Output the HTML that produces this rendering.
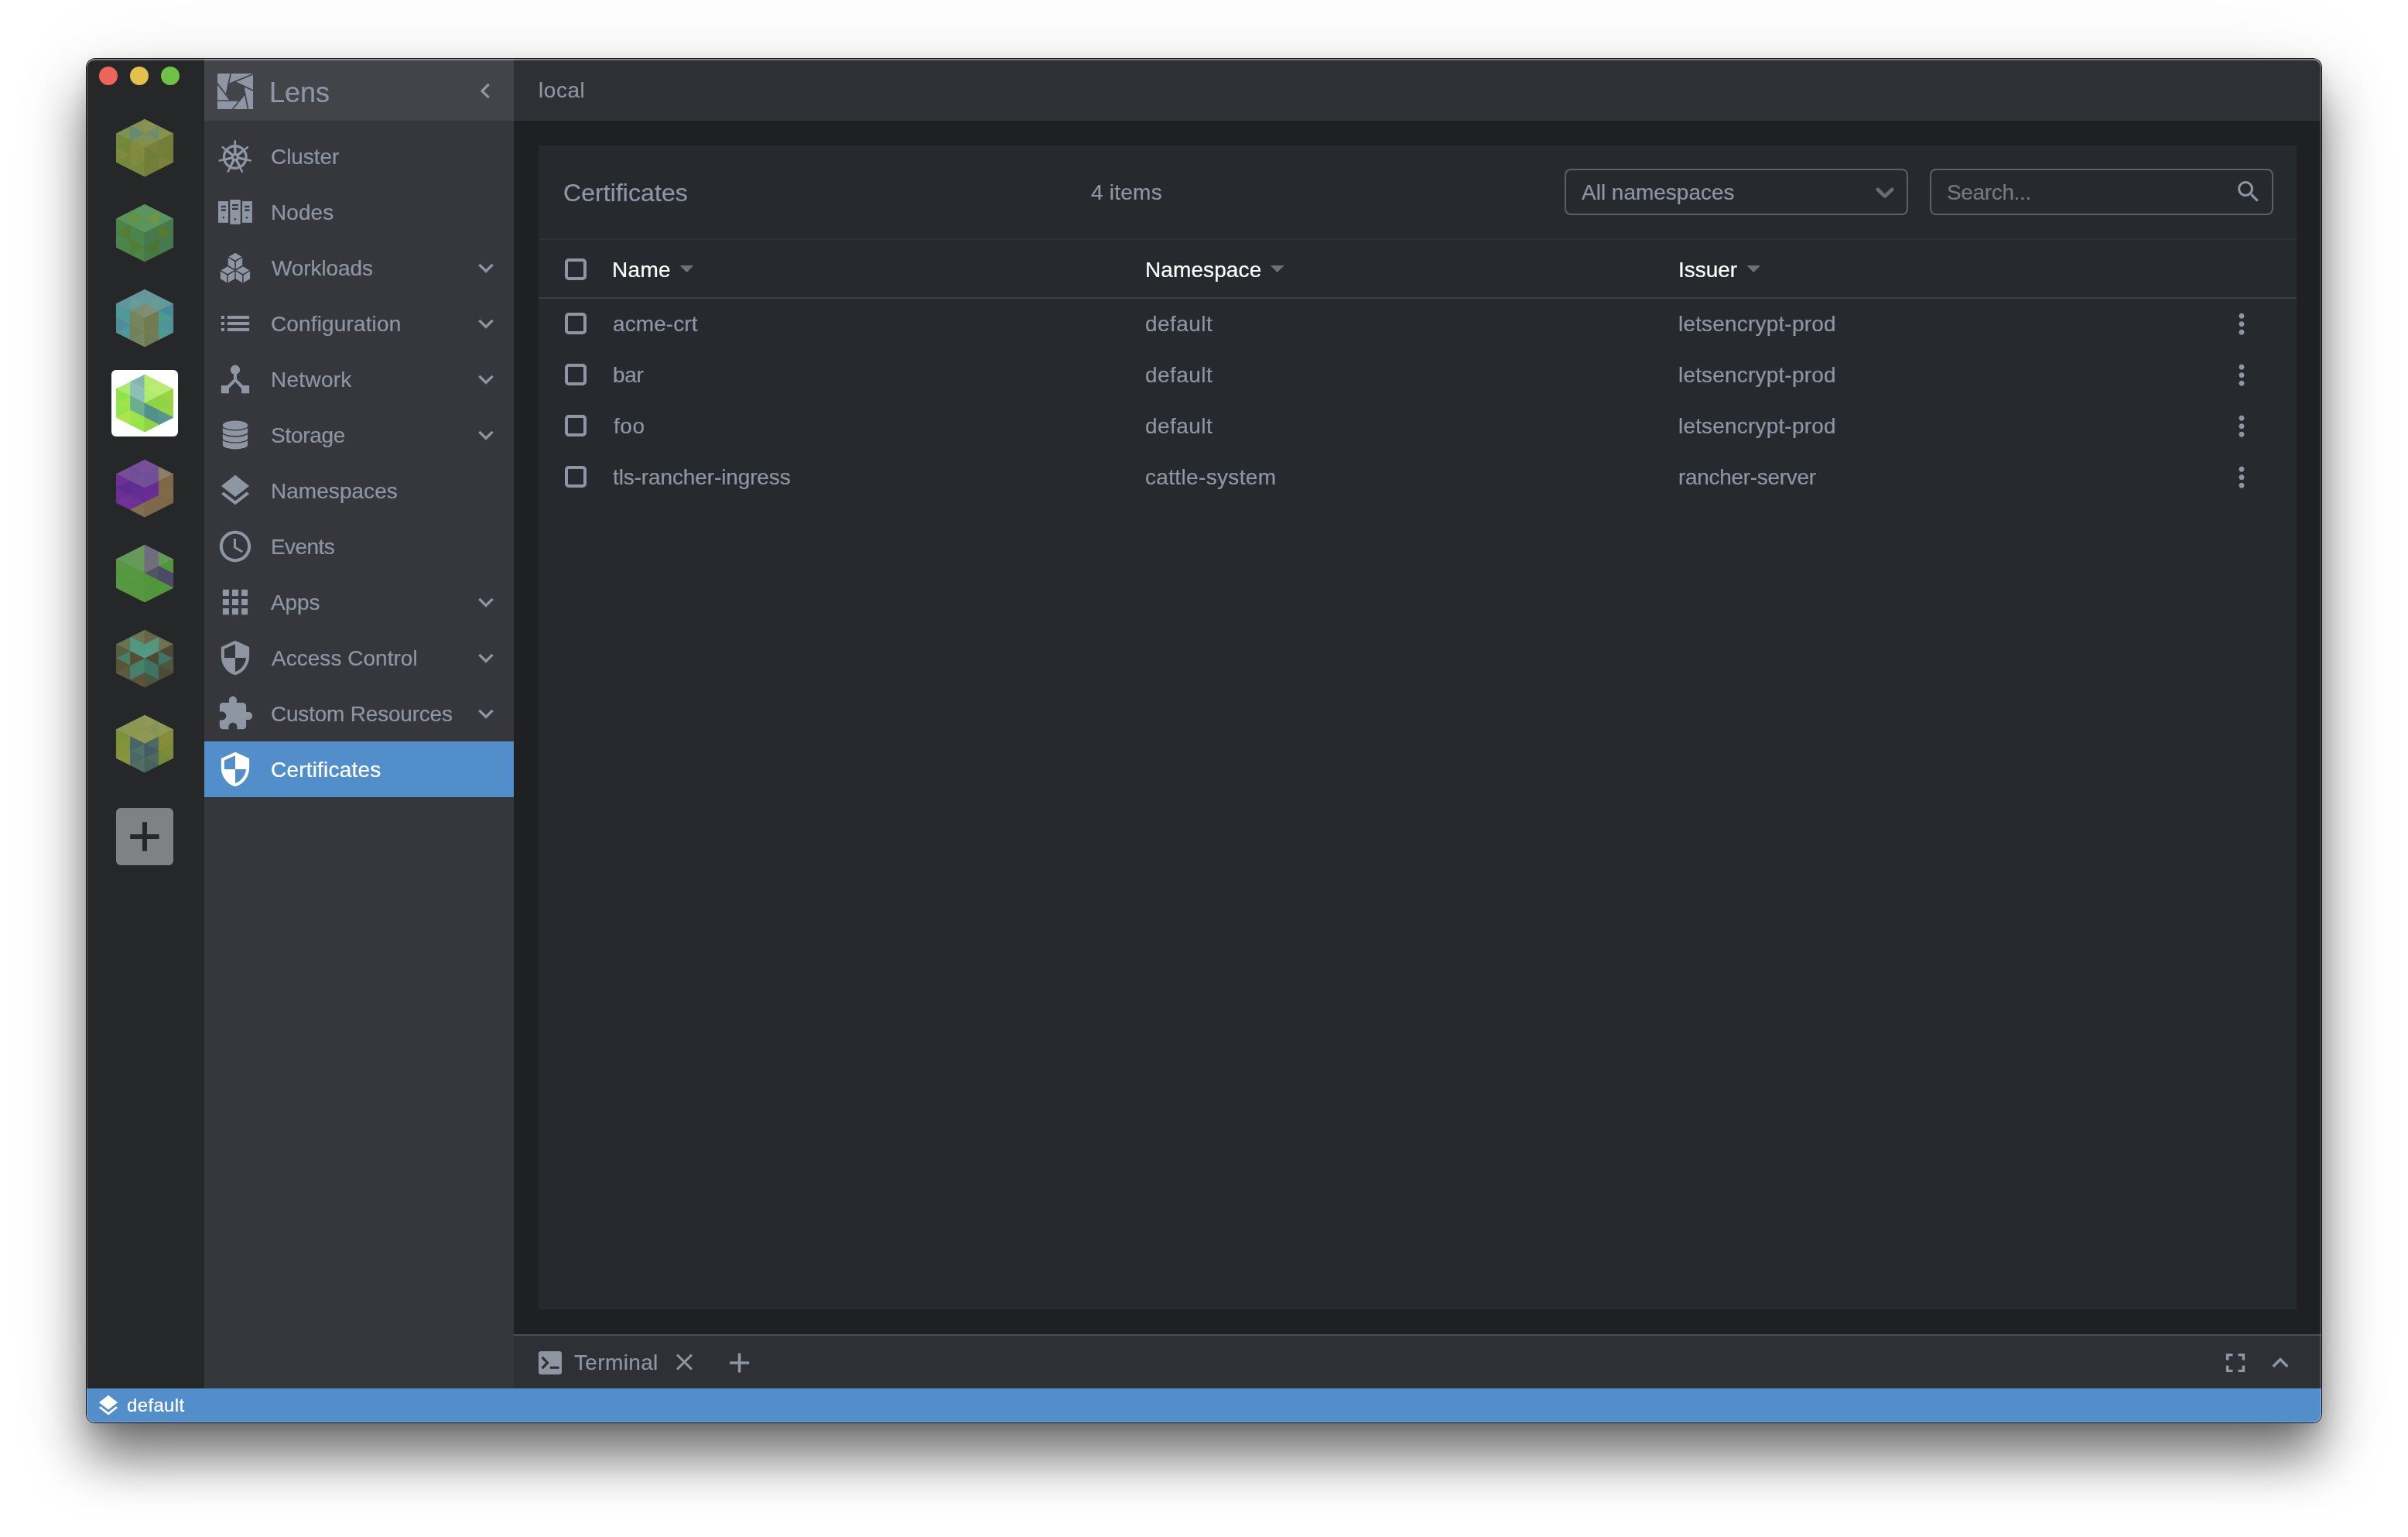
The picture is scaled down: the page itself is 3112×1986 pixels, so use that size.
<!DOCTYPE html>
<html lang="en">
<head>
<meta charset="utf-8">
<title>Lens - Certificates</title>
<style>
*{box-sizing:border-box;margin:0;padding:0}
html,body{width:3112px;height:1986px;overflow:hidden;background:#fff}
body{font-family:"Liberation Sans",sans-serif;color:#8e95a3;position:relative}
#shadow{position:absolute;left:112px;top:76px;width:2888px;height:1762px;border-radius:11px;
  box-shadow:0 0 0 1px rgba(0,0,0,.9),0 45px 68px 0 rgba(0,0,0,.55),0 7px 20px 0 rgba(0,0,0,.117),0 0 135px 0 rgba(0,0,0,.053)}
#win{position:absolute;left:0;top:0;width:3112px;height:1986px;clip-path:inset(76px 112px 148px 112px round 10px)}
.p{position:absolute}
.g{display:contents}
#rim{left:112px;top:76px;width:2888px;height:1762px;border-radius:10px;z-index:50;
  box-shadow:inset 0 2px 0 0 rgba(255,255,255,.38), inset 1px 0 0 0 rgba(255,255,255,.17), inset 2px 0 0 0 rgba(255,255,255,.06), inset -2px 0 0 0 rgba(255,255,255,.17), inset 0 -1px 0 0 rgba(255,255,255,.3)}
#clusters{left:112px;top:76px;width:152px;height:1718px;background:#262729}
#sidebar{left:264px;top:76px;width:400px;height:1718px;background:#36373c}
#sbhead{left:264px;top:76px;width:400px;height:80px;background:#434449}
#active{left:264px;top:958px;width:400px;height:72px;background:#528fca}
#topbar{left:664px;top:76px;width:2336px;height:80px;background:#2f3035}
#mainbg{left:664px;top:156px;width:2336px;height:1568px;background:#1f2024}
#panel{left:696px;top:188px;width:2272px;height:1504px;background:#262a2f}
#dock{left:664px;top:1724px;width:2336px;height:70px;background:#2f3035;border-top:2px solid #4c4f53}
#status{left:112px;top:1794px;width:2888px;height:44px;background:#528fca}
.t{position:absolute;white-space:nowrap;line-height:1;will-change:transform;-webkit-text-stroke:.22px currentColor}
.ic{position:absolute;overflow:visible}
.tl{position:absolute;width:24px;height:24px;border-radius:50%;top:86px}
.hl{position:absolute;left:696px;width:2272px;height:2px}
.cb{position:absolute;left:730px;width:28px;height:28px;border:4px solid #8e95a3;border-radius:5px}
.box{position:absolute;top:218px;width:444px;height:60px;border:2px solid #5c6069;border-radius:8px}
#addc{position:absolute;left:150px;top:1044px;width:74px;height:74px;border-radius:6px;background:#808183}
#actc{position:absolute;left:144px;top:478px;width:86px;height:86px;border-radius:6px;background:#fff}
</style>
</head>
<body>
<div id="shadow"></div>
<div id="win">
<aside class="p" id="clusters"></aside>
<nav class="p" id="sidebar"></nav>
<div class="p" id="sbhead"></div>
<div class="p" id="active"></div>
<header class="p" id="topbar"></header>
<main class="p" id="mainbg"></main>
<div class="p" id="panel"></div>
<footer class="p" id="dock"></footer>
<div class="p" id="status"></div>

<div class="tl" style="left:128px;background:#ed655a"></div>
<div class="tl" style="left:168px;background:#e2c14c"></div>
<div class="tl" style="left:208px;background:#71c148"></div>
<div id="actc"></div>
<svg class="ic" style="left:148px;top:152px" width="80" height="80" viewBox="148 152 80 80"><polygon points="150.45,172.7 168.75,163.5 168.75,181.9" fill="#7f9050" stroke="#7f9050" stroke-width="1" stroke-linejoin="round"/><polygon points="150.45,172.7 150.45,191.1 168.75,181.9" fill="#74893c" stroke="#74893c" stroke-width="1" stroke-linejoin="round"/><polygon points="150.45,191.1 168.75,181.9 168.75,200.3" fill="#71883b" stroke="#71883b" stroke-width="1" stroke-linejoin="round"/><polygon points="150.45,191.1 150.45,209.5 168.75,200.3" fill="#7c8b3d" stroke="#7c8b3d" stroke-width="1" stroke-linejoin="round"/><polygon points="150.45,209.5 168.75,200.3 168.75,218.7" fill="#74893c" stroke="#74893c" stroke-width="1" stroke-linejoin="round"/><polygon points="168.75,163.5 187.05,154.3 187.05,172.7" fill="#869150" stroke="#869150" stroke-width="1" stroke-linejoin="round"/><polygon points="168.75,163.5 168.75,181.9 187.05,172.7" fill="#638c77" stroke="#638c77" stroke-width="1" stroke-linejoin="round"/><polygon points="168.75,181.9 187.05,172.7 187.05,191.1" fill="#809052" stroke="#809052" stroke-width="1" stroke-linejoin="round"/><polygon points="168.75,181.9 168.75,200.3 187.05,191.1" fill="#848a3b" stroke="#848a3b" stroke-width="1" stroke-linejoin="round"/><polygon points="168.75,200.3 187.05,191.1 187.05,209.5" fill="#848a3b" stroke="#848a3b" stroke-width="1" stroke-linejoin="round"/><polygon points="168.75,200.3 168.75,218.7 187.05,209.5" fill="#7d8b3e" stroke="#7d8b3e" stroke-width="1" stroke-linejoin="round"/><polygon points="168.75,218.7 187.05,209.5 187.05,227.9" fill="#74893c" stroke="#74893c" stroke-width="1" stroke-linejoin="round"/><polygon points="187.05,154.3 187.05,172.7 205.35,163.5" fill="#8a9352" stroke="#8a9352" stroke-width="1" stroke-linejoin="round"/><polygon points="187.05,172.7 205.35,163.5 205.35,181.9" fill="#6b8e6e" stroke="#6b8e6e" stroke-width="1" stroke-linejoin="round"/><polygon points="187.05,172.7 187.05,191.1 205.35,181.9" fill="#819052" stroke="#819052" stroke-width="1" stroke-linejoin="round"/><polygon points="187.05,191.1 205.35,181.9 205.35,200.3" fill="#7a7f3a" stroke="#7a7f3a" stroke-width="1" stroke-linejoin="round"/><polygon points="187.05,191.1 187.05,209.5 205.35,200.3" fill="#717e39" stroke="#717e39" stroke-width="1" stroke-linejoin="round"/><polygon points="187.05,209.5 205.35,200.3 205.35,218.7" fill="#727f3a" stroke="#727f3a" stroke-width="1" stroke-linejoin="round"/><polygon points="187.05,209.5 187.05,227.9 205.35,218.7" fill="#727f3a" stroke="#727f3a" stroke-width="1" stroke-linejoin="round"/><polygon points="205.35,163.5 205.35,181.9 223.65,172.7" fill="#849350" stroke="#849350" stroke-width="1" stroke-linejoin="round"/><polygon points="205.35,181.9 223.65,172.7 223.65,191.1" fill="#737f38" stroke="#737f38" stroke-width="1" stroke-linejoin="round"/><polygon points="205.35,181.9 205.35,200.3 223.65,191.1" fill="#737f3a" stroke="#737f3a" stroke-width="1" stroke-linejoin="round"/><polygon points="205.35,200.3 223.65,191.1 223.65,209.5" fill="#6f7f39" stroke="#6f7f39" stroke-width="1" stroke-linejoin="round"/><polygon points="205.35,200.3 205.35,218.7 223.65,209.5" fill="#7b803a" stroke="#7b803a" stroke-width="1" stroke-linejoin="round"/></svg>
<svg class="ic" style="left:148px;top:262px" width="80" height="80" viewBox="148 262 80 80"><polygon points="150.45,282.7 168.75,273.5 168.75,291.9" fill="#59945d" stroke="#59945d" stroke-width="1" stroke-linejoin="round"/><polygon points="150.45,282.7 150.45,301.1 168.75,291.9" fill="#4b8549" stroke="#4b8549" stroke-width="1" stroke-linejoin="round"/><polygon points="150.45,301.1 168.75,291.9 168.75,310.3" fill="#547f33" stroke="#547f33" stroke-width="1" stroke-linejoin="round"/><polygon points="150.45,301.1 150.45,319.5 168.75,310.3" fill="#4a8453" stroke="#4a8453" stroke-width="1" stroke-linejoin="round"/><polygon points="150.45,319.5 168.75,310.3 168.75,328.7" fill="#4b8547" stroke="#4b8547" stroke-width="1" stroke-linejoin="round"/><polygon points="168.75,273.5 187.05,264.3 187.05,282.7" fill="#5a955e" stroke="#5a955e" stroke-width="1" stroke-linejoin="round"/><polygon points="168.75,273.5 168.75,291.9 187.05,282.7" fill="#649441" stroke="#649441" stroke-width="1" stroke-linejoin="round"/><polygon points="168.75,291.9 187.05,282.7 187.05,301.1" fill="#5a955d" stroke="#5a955d" stroke-width="1" stroke-linejoin="round"/><polygon points="168.75,291.9 168.75,310.3 187.05,301.1" fill="#4b854b" stroke="#4b854b" stroke-width="1" stroke-linejoin="round"/><polygon points="168.75,310.3 187.05,301.1 187.05,319.5" fill="#4b854c" stroke="#4b854c" stroke-width="1" stroke-linejoin="round"/><polygon points="168.75,310.3 168.75,328.7 187.05,319.5" fill="#547f33" stroke="#547f33" stroke-width="1" stroke-linejoin="round"/><polygon points="168.75,328.7 187.05,319.5 187.05,337.9" fill="#4c8548" stroke="#4c8548" stroke-width="1" stroke-linejoin="round"/><polygon points="187.05,264.3 187.05,282.7 205.35,273.5" fill="#5a9564" stroke="#5a9564" stroke-width="1" stroke-linejoin="round"/><polygon points="187.05,282.7 205.35,273.5 205.35,291.9" fill="#6f9444" stroke="#6f9444" stroke-width="1" stroke-linejoin="round"/><polygon points="187.05,282.7 187.05,301.1 205.35,291.9" fill="#5a955d" stroke="#5a955d" stroke-width="1" stroke-linejoin="round"/><polygon points="187.05,301.1 205.35,291.9 205.35,310.3" fill="#467a4b" stroke="#467a4b" stroke-width="1" stroke-linejoin="round"/><polygon points="187.05,301.1 187.05,319.5 205.35,310.3" fill="#467a4d" stroke="#467a4d" stroke-width="1" stroke-linejoin="round"/><polygon points="187.05,319.5 205.35,310.3 205.35,328.7" fill="#4a7632" stroke="#4a7632" stroke-width="1" stroke-linejoin="round"/><polygon points="187.05,319.5 187.05,337.9 205.35,328.7" fill="#467a45" stroke="#467a45" stroke-width="1" stroke-linejoin="round"/><polygon points="205.35,273.5 205.35,291.9 223.65,282.7" fill="#59955f" stroke="#59955f" stroke-width="1" stroke-linejoin="round"/><polygon points="205.35,291.9 223.65,282.7 223.65,301.1" fill="#467a4c" stroke="#467a4c" stroke-width="1" stroke-linejoin="round"/><polygon points="205.35,291.9 205.35,310.3 223.65,301.1" fill="#557a31" stroke="#557a31" stroke-width="1" stroke-linejoin="round"/><polygon points="205.35,310.3 223.65,301.1 223.65,319.5" fill="#467a4c" stroke="#467a4c" stroke-width="1" stroke-linejoin="round"/><polygon points="205.35,310.3 205.35,328.7 223.65,319.5" fill="#467a4c" stroke="#467a4c" stroke-width="1" stroke-linejoin="round"/></svg>
<svg class="ic" style="left:148px;top:372px" width="80" height="80" viewBox="148 372 80 80"><polygon points="150.45,392.7 168.75,383.5 168.75,401.9" fill="#62979a" stroke="#62979a" stroke-width="1" stroke-linejoin="round"/><polygon points="150.45,392.7 150.45,411.1 168.75,401.9" fill="#509997" stroke="#509997" stroke-width="1" stroke-linejoin="round"/><polygon points="150.45,411.1 168.75,401.9 168.75,420.3" fill="#509997" stroke="#509997" stroke-width="1" stroke-linejoin="round"/><polygon points="150.45,411.1 150.45,429.5 168.75,420.3" fill="#4e8c9a" stroke="#4e8c9a" stroke-width="1" stroke-linejoin="round"/><polygon points="150.45,429.5 168.75,420.3 168.75,438.7" fill="#51979a" stroke="#51979a" stroke-width="1" stroke-linejoin="round"/><polygon points="168.75,383.5 187.05,374.3 187.05,392.7" fill="#65989b" stroke="#65989b" stroke-width="1" stroke-linejoin="round"/><polygon points="168.75,383.5 168.75,401.9 187.05,392.7" fill="#659d9b" stroke="#659d9b" stroke-width="1" stroke-linejoin="round"/><polygon points="168.75,401.9 187.05,392.7 187.05,411.1" fill="#7e8c72" stroke="#7e8c72" stroke-width="1" stroke-linejoin="round"/><polygon points="168.75,401.9 168.75,420.3 187.05,411.1" fill="#76855a" stroke="#76855a" stroke-width="1" stroke-linejoin="round"/><polygon points="168.75,420.3 187.05,411.1 187.05,429.5" fill="#76855b" stroke="#76855b" stroke-width="1" stroke-linejoin="round"/><polygon points="168.75,420.3 168.75,438.7 187.05,429.5" fill="#74805a" stroke="#74805a" stroke-width="1" stroke-linejoin="round"/><polygon points="168.75,438.7 187.05,429.5 187.05,447.9" fill="#78865d" stroke="#78865d" stroke-width="1" stroke-linejoin="round"/><polygon points="187.05,374.3 187.05,392.7 205.35,383.5" fill="#65989b" stroke="#65989b" stroke-width="1" stroke-linejoin="round"/><polygon points="187.05,392.7 205.35,383.5 205.35,401.9" fill="#669b97" stroke="#669b97" stroke-width="1" stroke-linejoin="round"/><polygon points="187.05,392.7 187.05,411.1 205.35,401.9" fill="#808f76" stroke="#808f76" stroke-width="1" stroke-linejoin="round"/><polygon points="187.05,411.1 205.35,401.9 205.35,420.3" fill="#707b52" stroke="#707b52" stroke-width="1" stroke-linejoin="round"/><polygon points="187.05,411.1 187.05,429.5 205.35,420.3" fill="#707b52" stroke="#707b52" stroke-width="1" stroke-linejoin="round"/><polygon points="187.05,429.5 205.35,420.3 205.35,438.7" fill="#727f55" stroke="#727f55" stroke-width="1" stroke-linejoin="round"/><polygon points="187.05,429.5 187.05,447.9 205.35,438.7" fill="#707a4f" stroke="#707a4f" stroke-width="1" stroke-linejoin="round"/><polygon points="205.35,383.5 205.35,401.9 223.65,392.7" fill="#64989b" stroke="#64989b" stroke-width="1" stroke-linejoin="round"/><polygon points="205.35,401.9 223.65,392.7 223.65,411.1" fill="#478a9b" stroke="#478a9b" stroke-width="1" stroke-linejoin="round"/><polygon points="205.35,401.9 205.35,420.3 223.65,411.1" fill="#4e9990" stroke="#4e9990" stroke-width="1" stroke-linejoin="round"/><polygon points="205.35,420.3 223.65,411.1 223.65,429.5" fill="#4d959a" stroke="#4d959a" stroke-width="1" stroke-linejoin="round"/><polygon points="205.35,420.3 205.35,438.7 223.65,429.5" fill="#4e9990" stroke="#4e9990" stroke-width="1" stroke-linejoin="round"/></svg>
<svg class="ic" style="left:148px;top:482px" width="80" height="80" viewBox="148 482 80 80"><polygon points="150.45,502.7 168.75,493.5 168.75,511.9" fill="#abeb6e" stroke="#abeb6e" stroke-width="1" stroke-linejoin="round"/><polygon points="150.45,502.7 150.45,521.1 168.75,511.9" fill="#8fe449" stroke="#8fe449" stroke-width="1" stroke-linejoin="round"/><polygon points="150.45,521.1 168.75,511.9 168.75,530.3" fill="#9ee54a" stroke="#9ee54a" stroke-width="1" stroke-linejoin="round"/><polygon points="150.45,521.1 150.45,539.5 168.75,530.3" fill="#96e44b" stroke="#96e44b" stroke-width="1" stroke-linejoin="round"/><polygon points="150.45,539.5 168.75,530.3 168.75,548.7" fill="#b0e44b" stroke="#b0e44b" stroke-width="1" stroke-linejoin="round"/><polygon points="168.75,493.5 187.05,484.3 187.05,502.7" fill="#85b5b0" stroke="#85b5b0" stroke-width="1" stroke-linejoin="round"/><polygon points="168.75,493.5 168.75,511.9 187.05,502.7" fill="#8dc0b5" stroke="#8dc0b5" stroke-width="1" stroke-linejoin="round"/><polygon points="168.75,511.9 187.05,502.7 187.05,521.1" fill="#8dbfb6" stroke="#8dbfb6" stroke-width="1" stroke-linejoin="round"/><polygon points="168.75,511.9 168.75,530.3 187.05,521.1" fill="#6baf8f" stroke="#6baf8f" stroke-width="1" stroke-linejoin="round"/><polygon points="168.75,530.3 187.05,521.1 187.05,539.5" fill="#69ae8e" stroke="#69ae8e" stroke-width="1" stroke-linejoin="round"/><polygon points="168.75,530.3 168.75,548.7 187.05,539.5" fill="#9ce64c" stroke="#9ce64c" stroke-width="1" stroke-linejoin="round"/><polygon points="168.75,548.7 187.05,539.5 187.05,557.9" fill="#94e54a" stroke="#94e54a" stroke-width="1" stroke-linejoin="round"/><polygon points="187.05,484.3 187.05,502.7 205.35,493.5" fill="#b5ea6d" stroke="#b5ea6d" stroke-width="1" stroke-linejoin="round"/><polygon points="187.05,502.7 205.35,493.5 205.35,511.9" fill="#bbeb72" stroke="#bbeb72" stroke-width="1" stroke-linejoin="round"/><polygon points="187.05,502.7 187.05,521.1 205.35,511.9" fill="#b0eb70" stroke="#b0eb70" stroke-width="1" stroke-linejoin="round"/><polygon points="187.05,521.1 205.35,511.9 205.35,530.3" fill="#8dd347" stroke="#8dd347" stroke-width="1" stroke-linejoin="round"/><polygon points="187.05,521.1 187.05,539.5 205.35,530.3" fill="#52908c" stroke="#52908c" stroke-width="1" stroke-linejoin="round"/><polygon points="187.05,539.5 205.35,530.3 205.35,548.7" fill="#52908c" stroke="#52908c" stroke-width="1" stroke-linejoin="round"/><polygon points="187.05,539.5 187.05,557.9 205.35,548.7" fill="#8fd445" stroke="#8fd445" stroke-width="1" stroke-linejoin="round"/><polygon points="205.35,493.5 205.35,511.9 223.65,502.7" fill="#bbeb72" stroke="#bbeb72" stroke-width="1" stroke-linejoin="round"/><polygon points="205.35,511.9 223.65,502.7 223.65,521.1" fill="#99d446" stroke="#99d446" stroke-width="1" stroke-linejoin="round"/><polygon points="205.35,511.9 205.35,530.3 223.65,521.1" fill="#8fd347" stroke="#8fd347" stroke-width="1" stroke-linejoin="round"/><polygon points="205.35,530.3 223.65,521.1 223.65,539.5" fill="#99d445" stroke="#99d445" stroke-width="1" stroke-linejoin="round"/><polygon points="205.35,530.3 205.35,548.7 223.65,539.5" fill="#55978e" stroke="#55978e" stroke-width="1" stroke-linejoin="round"/></svg>
<svg class="ic" style="left:148px;top:592px" width="80" height="80" viewBox="148 592 80 80"><polygon points="150.45,612.7 168.75,603.5 168.75,621.9" fill="#774f96" stroke="#774f96" stroke-width="1" stroke-linejoin="round"/><polygon points="150.45,612.7 150.45,631.1 168.75,621.9" fill="#6b3196" stroke="#6b3196" stroke-width="1" stroke-linejoin="round"/><polygon points="150.45,631.1 168.75,621.9 168.75,640.3" fill="#5c2d91" stroke="#5c2d91" stroke-width="1" stroke-linejoin="round"/><polygon points="150.45,631.1 150.45,649.5 168.75,640.3" fill="#6a3097" stroke="#6a3097" stroke-width="1" stroke-linejoin="round"/><polygon points="150.45,649.5 168.75,640.3 168.75,658.7" fill="#723197" stroke="#723197" stroke-width="1" stroke-linejoin="round"/><polygon points="168.75,603.5 187.05,594.3 187.05,612.7" fill="#78509a" stroke="#78509a" stroke-width="1" stroke-linejoin="round"/><polygon points="168.75,603.5 168.75,621.9 187.05,612.7" fill="#6f4f97" stroke="#6f4f97" stroke-width="1" stroke-linejoin="round"/><polygon points="168.75,621.9 187.05,612.7 187.05,631.1" fill="#745097" stroke="#745097" stroke-width="1" stroke-linejoin="round"/><polygon points="168.75,621.9 168.75,640.3 187.05,631.1" fill="#622e94" stroke="#622e94" stroke-width="1" stroke-linejoin="round"/><polygon points="168.75,640.3 187.05,631.1 187.05,649.5" fill="#622e94" stroke="#622e94" stroke-width="1" stroke-linejoin="round"/><polygon points="168.75,640.3 168.75,658.7 187.05,649.5" fill="#6e3097" stroke="#6e3097" stroke-width="1" stroke-linejoin="round"/><polygon points="168.75,658.7 187.05,649.5 187.05,667.9" fill="#80704f" stroke="#80704f" stroke-width="1" stroke-linejoin="round"/><polygon points="187.05,594.3 187.05,612.7 205.35,603.5" fill="#78509a" stroke="#78509a" stroke-width="1" stroke-linejoin="round"/><polygon points="187.05,612.7 205.35,603.5 205.35,621.9" fill="#744e96" stroke="#744e96" stroke-width="1" stroke-linejoin="round"/><polygon points="187.05,612.7 187.05,631.1 205.35,621.9" fill="#6f4f97" stroke="#6f4f97" stroke-width="1" stroke-linejoin="round"/><polygon points="187.05,631.1 205.35,621.9 205.35,640.3" fill="#682b94" stroke="#682b94" stroke-width="1" stroke-linejoin="round"/><polygon points="187.05,631.1 187.05,649.5 205.35,640.3" fill="#6b2c95" stroke="#6b2c95" stroke-width="1" stroke-linejoin="round"/><polygon points="187.05,649.5 205.35,640.3 205.35,658.7" fill="#7e6a4b" stroke="#7e6a4b" stroke-width="1" stroke-linejoin="round"/><polygon points="187.05,649.5 187.05,667.9 205.35,658.7" fill="#7d694a" stroke="#7d694a" stroke-width="1" stroke-linejoin="round"/><polygon points="205.35,603.5 205.35,621.9 223.65,612.7" fill="#8a7e6a" stroke="#8a7e6a" stroke-width="1" stroke-linejoin="round"/><polygon points="205.35,621.9 223.65,612.7 223.65,631.1" fill="#7f674a" stroke="#7f674a" stroke-width="1" stroke-linejoin="round"/><polygon points="205.35,621.9 205.35,640.3 223.65,631.1" fill="#7e6a4b" stroke="#7e6a4b" stroke-width="1" stroke-linejoin="round"/><polygon points="205.35,640.3 223.65,631.1 223.65,649.5" fill="#7e6a4b" stroke="#7e6a4b" stroke-width="1" stroke-linejoin="round"/><polygon points="205.35,640.3 205.35,658.7 223.65,649.5" fill="#7f674a" stroke="#7f674a" stroke-width="1" stroke-linejoin="round"/></svg>
<svg class="ic" style="left:148px;top:702px" width="80" height="80" viewBox="148 702 80 80"><polygon points="150.45,722.7 168.75,713.5 168.75,731.9" fill="#65995a" stroke="#65995a" stroke-width="1" stroke-linejoin="round"/><polygon points="150.45,722.7 150.45,741.1 168.75,731.9" fill="#55983f" stroke="#55983f" stroke-width="1" stroke-linejoin="round"/><polygon points="150.45,741.1 168.75,731.9 168.75,750.3" fill="#549840" stroke="#549840" stroke-width="1" stroke-linejoin="round"/><polygon points="150.45,741.1 150.45,759.5 168.75,750.3" fill="#549840" stroke="#549840" stroke-width="1" stroke-linejoin="round"/><polygon points="150.45,759.5 168.75,750.3 168.75,768.7" fill="#58983f" stroke="#58983f" stroke-width="1" stroke-linejoin="round"/><polygon points="168.75,713.5 187.05,704.3 187.05,722.7" fill="#67995a" stroke="#67995a" stroke-width="1" stroke-linejoin="round"/><polygon points="168.75,713.5 168.75,731.9 187.05,722.7" fill="#67995a" stroke="#67995a" stroke-width="1" stroke-linejoin="round"/><polygon points="168.75,731.9 187.05,722.7 187.05,741.1" fill="#64995b" stroke="#64995b" stroke-width="1" stroke-linejoin="round"/><polygon points="168.75,731.9 168.75,750.3 187.05,741.1" fill="#579840" stroke="#579840" stroke-width="1" stroke-linejoin="round"/><polygon points="168.75,750.3 187.05,741.1 187.05,759.5" fill="#549840" stroke="#549840" stroke-width="1" stroke-linejoin="round"/><polygon points="168.75,750.3 168.75,768.7 187.05,759.5" fill="#549840" stroke="#549840" stroke-width="1" stroke-linejoin="round"/><polygon points="168.75,768.7 187.05,759.5 187.05,777.9" fill="#57983f" stroke="#57983f" stroke-width="1" stroke-linejoin="round"/><polygon points="187.05,704.3 187.05,722.7 205.35,713.5" fill="#6e6c7f" stroke="#6e6c7f" stroke-width="1" stroke-linejoin="round"/><polygon points="187.05,722.7 205.35,713.5 205.35,731.9" fill="#6e6c7d" stroke="#6e6c7d" stroke-width="1" stroke-linejoin="round"/><polygon points="187.05,722.7 187.05,741.1 205.35,731.9" fill="#6f7079" stroke="#6f7079" stroke-width="1" stroke-linejoin="round"/><polygon points="187.05,741.1 205.35,731.9 205.35,750.3" fill="#505466" stroke="#505466" stroke-width="1" stroke-linejoin="round"/><polygon points="187.05,741.1 187.05,759.5 205.35,750.3" fill="#51953c" stroke="#51953c" stroke-width="1" stroke-linejoin="round"/><polygon points="187.05,759.5 205.35,750.3 205.35,768.7" fill="#51953c" stroke="#51953c" stroke-width="1" stroke-linejoin="round"/><polygon points="187.05,759.5 187.05,777.9 205.35,768.7" fill="#51953c" stroke="#51953c" stroke-width="1" stroke-linejoin="round"/><polygon points="205.35,713.5 205.35,731.9 223.65,722.7" fill="#639a5a" stroke="#639a5a" stroke-width="1" stroke-linejoin="round"/><polygon points="205.35,731.9 223.65,722.7 223.65,741.1" fill="#51953c" stroke="#51953c" stroke-width="1" stroke-linejoin="round"/><polygon points="205.35,731.9 205.35,750.3 223.65,741.1" fill="#4d4a68" stroke="#4d4a68" stroke-width="1" stroke-linejoin="round"/><polygon points="205.35,750.3 223.65,741.1 223.65,759.5" fill="#4d4a68" stroke="#4d4a68" stroke-width="1" stroke-linejoin="round"/><polygon points="205.35,750.3 205.35,768.7 223.65,759.5" fill="#53963c" stroke="#53963c" stroke-width="1" stroke-linejoin="round"/></svg>
<svg class="ic" style="left:148px;top:812px" width="80" height="80" viewBox="148 812 80 80"><polygon points="150.45,832.7 168.75,823.5 168.75,841.9" fill="#687453" stroke="#687453" stroke-width="1" stroke-linejoin="round"/><polygon points="150.45,832.7 150.45,851.1 168.75,841.9" fill="#565f41" stroke="#565f41" stroke-width="1" stroke-linejoin="round"/><polygon points="150.45,851.1 168.75,841.9 168.75,860.3" fill="#448065" stroke="#448065" stroke-width="1" stroke-linejoin="round"/><polygon points="150.45,851.1 150.45,869.5 168.75,860.3" fill="#5a5337" stroke="#5a5337" stroke-width="1" stroke-linejoin="round"/><polygon points="150.45,869.5 168.75,860.3 168.75,878.7" fill="#5b5c3e" stroke="#5b5c3e" stroke-width="1" stroke-linejoin="round"/><polygon points="168.75,823.5 187.05,814.3 187.05,832.7" fill="#687454" stroke="#687454" stroke-width="1" stroke-linejoin="round"/><polygon points="168.75,823.5 168.75,841.9 187.05,832.7" fill="#519882" stroke="#519882" stroke-width="1" stroke-linejoin="round"/><polygon points="168.75,841.9 187.05,832.7 187.05,851.1" fill="#519983" stroke="#519983" stroke-width="1" stroke-linejoin="round"/><polygon points="168.75,841.9 168.75,860.3 187.05,851.1" fill="#584c33" stroke="#584c33" stroke-width="1" stroke-linejoin="round"/><polygon points="168.75,860.3 187.05,851.1 187.05,869.5" fill="#458165" stroke="#458165" stroke-width="1" stroke-linejoin="round"/><polygon points="168.75,860.3 168.75,878.7 187.05,869.5" fill="#468170" stroke="#468170" stroke-width="1" stroke-linejoin="round"/><polygon points="168.75,878.7 187.05,869.5 187.05,887.9" fill="#5b533a" stroke="#5b533a" stroke-width="1" stroke-linejoin="round"/><polygon points="187.05,814.3 187.05,832.7 205.35,823.5" fill="#6b6547" stroke="#6b6547" stroke-width="1" stroke-linejoin="round"/><polygon points="187.05,832.7 205.35,823.5 205.35,841.9" fill="#539878" stroke="#539878" stroke-width="1" stroke-linejoin="round"/><polygon points="187.05,832.7 187.05,851.1 205.35,841.9" fill="#519983" stroke="#519983" stroke-width="1" stroke-linejoin="round"/><polygon points="187.05,851.1 205.35,841.9 205.35,860.3" fill="#504833" stroke="#504833" stroke-width="1" stroke-linejoin="round"/><polygon points="187.05,851.1 187.05,869.5 205.35,860.3" fill="#3e7463" stroke="#3e7463" stroke-width="1" stroke-linejoin="round"/><polygon points="187.05,869.5 205.35,860.3 205.35,878.7" fill="#3f7464" stroke="#3f7464" stroke-width="1" stroke-linejoin="round"/><polygon points="187.05,869.5 187.05,887.9 205.35,878.7" fill="#4c553c" stroke="#4c553c" stroke-width="1" stroke-linejoin="round"/><polygon points="205.35,823.5 205.35,841.9 223.65,832.7" fill="#6f7450" stroke="#6f7450" stroke-width="1" stroke-linejoin="round"/><polygon points="205.35,841.9 223.65,832.7 223.65,851.1" fill="#514833" stroke="#514833" stroke-width="1" stroke-linejoin="round"/><polygon points="205.35,841.9 205.35,860.3 223.65,851.1" fill="#3d7767" stroke="#3d7767" stroke-width="1" stroke-linejoin="round"/><polygon points="205.35,860.3 223.65,851.1 223.65,869.5" fill="#4e563d" stroke="#4e563d" stroke-width="1" stroke-linejoin="round"/><polygon points="205.35,860.3 205.35,878.7 223.65,869.5" fill="#4c4b36" stroke="#4c4b36" stroke-width="1" stroke-linejoin="round"/></svg>
<svg class="ic" style="left:148px;top:922px" width="80" height="80" viewBox="148 922 80 80"><polygon points="150.45,942.7 168.75,933.5 168.75,951.9" fill="#8c9755" stroke="#8c9755" stroke-width="1" stroke-linejoin="round"/><polygon points="150.45,942.7 150.45,961.1 168.75,951.9" fill="#7a923a" stroke="#7a923a" stroke-width="1" stroke-linejoin="round"/><polygon points="150.45,961.1 168.75,951.9 168.75,970.3" fill="#82933c" stroke="#82933c" stroke-width="1" stroke-linejoin="round"/><polygon points="150.45,961.1 150.45,979.5 168.75,970.3" fill="#82933c" stroke="#82933c" stroke-width="1" stroke-linejoin="round"/><polygon points="150.45,979.5 168.75,970.3 168.75,988.7" fill="#87953d" stroke="#87953d" stroke-width="1" stroke-linejoin="round"/><polygon points="168.75,933.5 187.05,924.3 187.05,942.7" fill="#8c9753" stroke="#8c9753" stroke-width="1" stroke-linejoin="round"/><polygon points="168.75,933.5 168.75,951.9 187.05,942.7" fill="#8c9753" stroke="#8c9753" stroke-width="1" stroke-linejoin="round"/><polygon points="168.75,951.9 187.05,942.7 187.05,961.1" fill="#8f9755" stroke="#8f9755" stroke-width="1" stroke-linejoin="round"/><polygon points="168.75,951.9 168.75,970.3 187.05,961.1" fill="#486468" stroke="#486468" stroke-width="1" stroke-linejoin="round"/><polygon points="168.75,970.3 187.05,961.1 187.05,979.5" fill="#4f7168" stroke="#4f7168" stroke-width="1" stroke-linejoin="round"/><polygon points="168.75,970.3 168.75,988.7 187.05,979.5" fill="#4a686a" stroke="#4a686a" stroke-width="1" stroke-linejoin="round"/><polygon points="168.75,988.7 187.05,979.5 187.05,997.9" fill="#516f60" stroke="#516f60" stroke-width="1" stroke-linejoin="round"/><polygon points="187.05,924.3 187.05,942.7 205.35,933.5" fill="#919755" stroke="#919755" stroke-width="1" stroke-linejoin="round"/><polygon points="187.05,942.7 205.35,933.5 205.35,951.9" fill="#859653" stroke="#859653" stroke-width="1" stroke-linejoin="round"/><polygon points="187.05,942.7 187.05,961.1 205.35,951.9" fill="#909755" stroke="#909755" stroke-width="1" stroke-linejoin="round"/><polygon points="187.05,961.1 205.35,951.9 205.35,970.3" fill="#4b6b60" stroke="#4b6b60" stroke-width="1" stroke-linejoin="round"/><polygon points="187.05,961.1 187.05,979.5 205.35,970.3" fill="#445c61" stroke="#445c61" stroke-width="1" stroke-linejoin="round"/><polygon points="187.05,979.5 205.35,970.3 205.35,988.7" fill="#4b6b60" stroke="#4b6b60" stroke-width="1" stroke-linejoin="round"/><polygon points="187.05,979.5 187.05,997.9 205.35,988.7" fill="#48645a" stroke="#48645a" stroke-width="1" stroke-linejoin="round"/><polygon points="205.35,933.5 205.35,951.9 223.65,942.7" fill="#8c9957" stroke="#8c9957" stroke-width="1" stroke-linejoin="round"/><polygon points="205.35,951.9 223.65,942.7 223.65,961.1" fill="#868c39" stroke="#868c39" stroke-width="1" stroke-linejoin="round"/><polygon points="205.35,951.9 205.35,970.3 223.65,961.1" fill="#868c39" stroke="#868c39" stroke-width="1" stroke-linejoin="round"/><polygon points="205.35,970.3 223.65,961.1 223.65,979.5" fill="#808b3a" stroke="#808b3a" stroke-width="1" stroke-linejoin="round"/><polygon points="205.35,970.3 205.35,988.7 223.65,979.5" fill="#748a3a" stroke="#748a3a" stroke-width="1" stroke-linejoin="round"/></svg>
<div id="addc"></div>
<svg class="ic" style="left:150px;top:1044px" width="74" height="74" viewBox="0 0 74 74"><path d="M18.3 37h37.4M37 18.3v37.4" stroke="#262729" stroke-width="6" fill="none"/></svg>
<svg class="ic" style="left:281px;top:95px;overflow:hidden" width="46" height="46" viewBox="0 0 46 46"><rect width="46" height="46" fill="#8e95a3"/><polygon points="22,10.6 14.3,14.0 11.5,26.5 16.5,35 28.5,35 35.7,26.2 33.8,16.2" fill="#434449"/><line x1="17.3" y1="-0.5" x2="11.4" y2="26.8" stroke="#434449" stroke-width="1.7"/><line x1="-0.5" y1="12.3" x2="16.7" y2="35.2" stroke="#434449" stroke-width="1.7"/><line x1="-0.5" y1="35" x2="28.8" y2="35" stroke="#434449" stroke-width="1.7"/><line x1="19.2" y1="46.5" x2="35.9" y2="26.0" stroke="#434449" stroke-width="1.7"/><line x1="39.6" y1="46.5" x2="33.6" y2="16.0" stroke="#434449" stroke-width="1.7"/><line x1="46.5" y1="22.2" x2="21.6" y2="10.3" stroke="#434449" stroke-width="1.7"/><line x1="46.5" y1="0.6" x2="13.0" y2="14.4" stroke="#434449" stroke-width="1.7"/></svg>
<svg class="ic" style="left:606px;top:96px" width="43" height="43" viewBox="0 0 43 43"><path fill="#8e95a3" transform="translate(1.70 1.80) scale(1.6333)" d="M15.41 16.59L10.83 12l4.58-4.59L14 6l-6 6 6 6 1.41-1.41z"/></svg>
<svg class="ic" style="left:279px;top:179px" width="50" height="50" viewBox="-24.8 -24 50 50"><g fill="none" stroke="#8e95a3" stroke-linecap="round"><circle r="14.3" stroke-width="3.3"/><line x1="0" y1="-3" x2="0" y2="-15" stroke-width="3.4" stroke-linecap="butt"/><line x1="0" y1="-15" x2="0" y2="-20.6" stroke-width="2.6"/><line x1="2.35" y1="-1.87" x2="11.73" y2="-9.35" stroke-width="3.4" stroke-linecap="butt"/><line x1="11.73" y1="-9.35" x2="16.11" y2="-12.84" stroke-width="2.6"/><line x1="2.92" y1="0.67" x2="14.62" y2="3.34" stroke-width="3.4" stroke-linecap="butt"/><line x1="14.62" y1="3.34" x2="20.08" y2="4.58" stroke-width="2.6"/><line x1="1.3" y1="2.7" x2="6.51" y2="13.51" stroke-width="3.4" stroke-linecap="butt"/><line x1="6.51" y1="13.51" x2="8.94" y2="18.56" stroke-width="2.6"/><line x1="-1.3" y1="2.7" x2="-6.51" y2="13.51" stroke-width="3.4" stroke-linecap="butt"/><line x1="-6.51" y1="13.51" x2="-8.94" y2="18.56" stroke-width="2.6"/><line x1="-2.92" y1="0.67" x2="-14.62" y2="3.34" stroke-width="3.4" stroke-linecap="butt"/><line x1="-14.62" y1="3.34" x2="-20.08" y2="4.58" stroke-width="2.6"/><line x1="-2.35" y1="-1.87" x2="-11.73" y2="-9.35" stroke-width="3.4" stroke-linecap="butt"/><line x1="-11.73" y1="-9.35" x2="-16.11" y2="-12.84" stroke-width="2.6"/></g><circle r="5.2" fill="#8e95a3"/><circle r="2" fill="#36373c"/></svg>
<svg class="ic" style="left:280px;top:250px" width="48" height="48" viewBox="280 250 48 48"><g fill="#8e95a3"><rect x="282" y="260" width="13" height="27.8"/><rect x="297.3" y="258" width="13.5" height="31.8"/><rect x="313" y="260" width="12.9" height="27.8"/></g><g fill="#36373c"><rect x="285.7" y="265.8" width="6.2" height="2.3"/><rect x="285.7" y="270.3" width="6.2" height="2.4"/><circle cx="288.8" cy="281.1" r="1.3"/><rect x="300" y="263.9" width="8" height="2.2"/><rect x="300" y="268.6" width="8" height="2.4"/><circle cx="303.9" cy="283.2" r="1.3"/><rect x="316.2" y="265.8" width="6.3" height="2.3"/><rect x="316.2" y="270.3" width="6.3" height="2.4"/><circle cx="319" cy="281.2" r="1.3"/></g></svg>
<svg class="ic" style="left:280px;top:322px" width="48" height="48" viewBox="280 322 48 48"><polygon points="304,326.85 313.2,332.18 313.2,342.82 304,348.15 294.8,342.82 294.8,332.18" fill="#8e95a3"/><line x1="304" y1="337.5" x2="313.2" y2="332.18" stroke="#36373c" stroke-width="1.5"/><line x1="304" y1="337.5" x2="304" y2="348.15" stroke="#36373c" stroke-width="1.5"/><line x1="304" y1="337.5" x2="294.8" y2="332.18" stroke="#36373c" stroke-width="1.5"/><polygon points="294.1,344.35 303.3,349.68 303.3,360.32 294.1,365.65 284.9,360.32 284.9,349.68" fill="#8e95a3"/><line x1="294.1" y1="355" x2="303.3" y2="349.68" stroke="#36373c" stroke-width="1.5"/><line x1="294.1" y1="355" x2="294.1" y2="365.65" stroke="#36373c" stroke-width="1.5"/><line x1="294.1" y1="355" x2="284.9" y2="349.68" stroke="#36373c" stroke-width="1.5"/><polygon points="313.9,344.35 323.1,349.68 323.1,360.32 313.9,365.65 304.7,360.32 304.7,349.68" fill="#8e95a3"/><line x1="313.9" y1="355" x2="323.1" y2="349.68" stroke="#36373c" stroke-width="1.5"/><line x1="313.9" y1="355" x2="313.9" y2="365.65" stroke="#36373c" stroke-width="1.5"/><line x1="313.9" y1="355" x2="304.7" y2="349.68" stroke="#36373c" stroke-width="1.5"/></svg>
<svg class="ic" style="left:278px;top:392px" width="52" height="52" viewBox="0 0 52 52"><path fill="#8e95a3" transform="translate(1.80 1.80) scale(2.0167)" d="M3 13h2v-2H3v2zm0 4h2v-2H3v2zm0-8h2V7H3v2zm4 4h14v-2H7v2zm0 4h14v-2H7v2zM7 7v2h14V7H7z"/></svg>
<svg class="ic" style="left:278px;top:464px" width="52" height="52" viewBox="0 0 52 52"><path fill="#8e95a3" transform="translate(1.80 1.80) scale(2.0167)" d="M17 16l-4-4V8.82C14.16 8.4 15 7.3 15 6c0-1.66-1.34-3-3-3S9 4.34 9 6c0 1.3.84 2.4 2 2.82V12l-4 4H3v5h5v-3.05l4-4.2 4 4.2V21h5v-5h-4z"/></svg>
<svg class="ic" style="left:280px;top:538px" width="48" height="48" viewBox="280 538 48 48"><path fill="#8e95a3" d="M287.85 549.4a16.15 5.85 0 0 1 32.3 0V574.65a16.15 5.85 0 0 1 -32.3 0z"/><path fill="none" stroke="#36373c" stroke-width="1.4" d="M286.85 550.0a17.15 5.85 0 0 0 34.3 0"/><path fill="none" stroke="#36373c" stroke-width="1.4" d="M286.85 558.1a17.15 5.85 0 0 0 34.3 0"/><path fill="none" stroke="#36373c" stroke-width="1.4" d="M286.85 566.3a17.15 5.85 0 0 0 34.3 0"/></svg>
<svg class="ic" style="left:278px;top:608px" width="52" height="52" viewBox="0 0 52 52"><path fill="#8e95a3" transform="translate(1.80 1.80) scale(2.0167)" d="M11.99 18.54l-7.37-5.73L3 14.07l9 7 9-7-1.63-1.27-7.38 5.74zM12 16l7.36-5.73L21 9l-9-7-9 7 1.63 1.27L12 16z"/></svg>
<svg class="ic" style="left:278px;top:680px" width="52" height="52" viewBox="0 0 52 52"><path fill="#8e95a3" transform="translate(1.80 1.80) scale(2.0167)" d="M11.99 2C6.47 2 2 6.48 2 12s4.47 10 9.99 10C17.52 22 22 17.52 22 12S17.52 2 11.99 2zM12 20c-4.42 0-8-3.58-8-8s3.58-8 8-8 8 3.58 8 8-3.58 8-8 8zm.5-13H11v6l5.25 3.15.75-1.23-4.5-2.67z"/></svg>
<svg class="ic" style="left:278px;top:752px" width="52" height="52" viewBox="0 0 52 52"><path fill="#8e95a3" transform="translate(1.80 1.80) scale(2.0167)" d="M4 8h4V4H4v4zm6 12h4v-4h-4v4zm-6 0h4v-4H4v4zm0-6h4v-4H4v4zm6 0h4v-4h-4v4zm6-10v4h4V4h-4zm-6 4h4V4h-4v4zm6 6h4v-4h-4v4zm0 6h4v-4h-4v4z"/></svg>
<svg class="ic" style="left:278px;top:824px" width="52" height="52" viewBox="0 0 52 52"><path fill="#8e95a3" transform="translate(1.80 1.80) scale(2.0167)" d="M12 1L3 5v6c0 5.55 3.84 10.74 9 12 5.16-1.26 9-6.45 9-12V5l-9-4zm0 10.99h7c-.53 4.12-3.28 7.79-7 8.94V12H5V6.3l7-3.11v8.8z"/></svg>
<svg class="ic" style="left:278px;top:896px" width="52" height="52" viewBox="0 0 52 52"><path fill="#8e95a3" transform="translate(1.80 1.80) scale(2.0167)" d="M20.5 11H19V7c0-1.1-.9-2-2-2h-4V3.5C13 2.12 11.88 1 10.5 1S8 2.12 8 3.5V5H4c-1.1 0-1.99.9-1.99 2v3.8H3.5c1.49 0 2.7 1.21 2.7 2.7s-1.21 2.7-2.7 2.7H2V20c0 1.1.9 2 2 2h3.8v-1.5c0-1.49 1.21-2.7 2.7-2.7 1.49 0 2.7 1.21 2.7 2.7V22H17c1.1 0 2-.9 2-2v-4h1.5c1.38 0 2.5-1.12 2.5-2.5S21.88 11 20.5 11z"/></svg>
<svg class="ic" style="left:278px;top:968px" width="52" height="52" viewBox="0 0 52 52"><path fill="#fff" transform="translate(1.80 1.80) scale(2.0167)" d="M12 1L3 5v6c0 5.55 3.84 10.74 9 12 5.16-1.26 9-6.45 9-12V5l-9-4zm0 10.99h7c-.53 4.12-3.28 7.79-7 8.94V12H5V6.3l7-3.11v8.8z"/></svg>
<svg class="ic" style="left:607px;top:325px" width="43" height="43" viewBox="0 0 43 43"><path fill="#8e95a3" transform="translate(1.40 1.60) scale(1.6333)" d="M7.41 8.59L12 13.17l4.59-4.58L18 10l-6 6-6-6 1.41-1.41z"/></svg>
<svg class="ic" style="left:607px;top:397px" width="43" height="43" viewBox="0 0 43 43"><path fill="#8e95a3" transform="translate(1.40 1.60) scale(1.6333)" d="M7.41 8.59L12 13.17l4.59-4.58L18 10l-6 6-6-6 1.41-1.41z"/></svg>
<svg class="ic" style="left:607px;top:469px" width="43" height="43" viewBox="0 0 43 43"><path fill="#8e95a3" transform="translate(1.40 1.60) scale(1.6333)" d="M7.41 8.59L12 13.17l4.59-4.58L18 10l-6 6-6-6 1.41-1.41z"/></svg>
<svg class="ic" style="left:607px;top:541px" width="43" height="43" viewBox="0 0 43 43"><path fill="#8e95a3" transform="translate(1.40 1.60) scale(1.6333)" d="M7.41 8.59L12 13.17l4.59-4.58L18 10l-6 6-6-6 1.41-1.41z"/></svg>
<svg class="ic" style="left:607px;top:757px" width="43" height="43" viewBox="0 0 43 43"><path fill="#8e95a3" transform="translate(1.40 1.60) scale(1.6333)" d="M7.41 8.59L12 13.17l4.59-4.58L18 10l-6 6-6-6 1.41-1.41z"/></svg>
<svg class="ic" style="left:607px;top:829px" width="43" height="43" viewBox="0 0 43 43"><path fill="#8e95a3" transform="translate(1.40 1.60) scale(1.6333)" d="M7.41 8.59L12 13.17l4.59-4.58L18 10l-6 6-6-6 1.41-1.41z"/></svg>
<svg class="ic" style="left:607px;top:901px" width="43" height="43" viewBox="0 0 43 43"><path fill="#8e95a3" transform="translate(1.40 1.60) scale(1.6333)" d="M7.41 8.59L12 13.17l4.59-4.58L18 10l-6 6-6-6 1.41-1.41z"/></svg>
<div class="hl" style="top:308px;background:#2f3338"></div>
<div class="hl" style="top:384px;background:#3a3d43"></div>
<div class="box" style="left:2022px"></div><div class="box" style="left:2494px"></div>
<svg class="ic" style="left:2416px;top:228px" width="40" height="40" viewBox="0 0 20 20"><path fill="#696d76" d="M4.516 7.548c0.436-0.446 1.043-0.481 1.576 0l3.908 3.747 3.908-3.747c0.533-0.481 1.141-0.446 1.574 0 0.436 0.445 0.408 1.197 0 1.615-0.406 0.418-4.695 4.502-4.695 4.502-0.217 0.223-0.502 0.335-0.787 0.335s-0.57-0.112-0.789-0.335c0 0-4.287-4.084-4.695-4.502s-0.436-1.17 0-1.615z"/></svg>
<svg class="ic" style="left:2886px;top:228px" width="40" height="40" viewBox="0 0 40 40"><path fill="#8e95a3" transform="translate(1.58 1.48) scale(1.5271)" d="M15.5 14h-.79l-.28-.27C15.41 12.59 16 11.11 16 9.5 16 5.91 13.09 3 9.5 3S3 5.91 3 9.5 5.91 16 9.5 16c1.61 0 3.09-.59 4.23-1.57l.27.28v.79l5 4.99L20.49 19l-4.99-5zm-6 0C7.01 14 5 11.99 5 9.5S7.01 5 9.5 5 14 7.01 14 9.5 11.99 14 9.5 14z"/></svg>
<div class="cb" style="top:334px"></div>
<div class="cb" style="top:404px"></div>
<div class="cb" style="top:470px"></div>
<div class="cb" style="top:536px"></div>
<div class="cb" style="top:602px"></div>
<svg class="ic" style="left:877px;top:340px" width="22" height="14" viewBox="877 340 22 14"><polygon points="878.6,343 896.4,343 887.5,352" fill="#6d7178"/></svg>
<svg class="ic" style="left:1640px;top:340px" width="22" height="14" viewBox="1640 340 22 14"><polygon points="1641.8,343 1659.6000000000001,343 1650.7,352" fill="#6d7178"/></svg>
<svg class="ic" style="left:2256px;top:340px" width="22" height="14" viewBox="2256 340 22 14"><polygon points="2257.4,343 2275.2000000000003,343 2266.3,352" fill="#6d7178"/></svg>
<svg class="ic" style="left:2875px;top:396px" width="46" height="46" viewBox="0 0 46 46"><path fill="#8e95a3" transform="translate(1.00 1.80) scale(1.7500)" d="M12 8c1.1 0 2-.9 2-2s-.9-2-2-2-2 .9-2 2 .9 2 2 2zm0 2c-1.1 0-2 .9-2 2s.9 2 2 2 2-.9 2-2-.9-2-2-2zm0 6c-1.1 0-2 .9-2 2s.9 2 2 2 2-.9 2-2-.9-2-2-2z"/></svg>
<svg class="ic" style="left:2875px;top:462px" width="46" height="46" viewBox="0 0 46 46"><path fill="#8e95a3" transform="translate(1.00 1.80) scale(1.7500)" d="M12 8c1.1 0 2-.9 2-2s-.9-2-2-2-2 .9-2 2 .9 2 2 2zm0 2c-1.1 0-2 .9-2 2s.9 2 2 2 2-.9 2-2-.9-2-2-2zm0 6c-1.1 0-2 .9-2 2s.9 2 2 2 2-.9 2-2-.9-2-2-2z"/></svg>
<svg class="ic" style="left:2875px;top:528px" width="46" height="46" viewBox="0 0 46 46"><path fill="#8e95a3" transform="translate(1.00 1.80) scale(1.7500)" d="M12 8c1.1 0 2-.9 2-2s-.9-2-2-2-2 .9-2 2 .9 2 2 2zm0 2c-1.1 0-2 .9-2 2s.9 2 2 2 2-.9 2-2-.9-2-2-2zm0 6c-1.1 0-2 .9-2 2s.9 2 2 2 2-.9 2-2-.9-2-2-2z"/></svg>
<svg class="ic" style="left:2875px;top:594px" width="46" height="46" viewBox="0 0 46 46"><path fill="#8e95a3" transform="translate(1.00 1.80) scale(1.7500)" d="M12 8c1.1 0 2-.9 2-2s-.9-2-2-2-2 .9-2 2 .9 2 2 2zm0 2c-1.1 0-2 .9-2 2s.9 2 2 2 2-.9 2-2-.9-2-2-2zm0 6c-1.1 0-2 .9-2 2s.9 2 2 2 2-.9 2-2-.9-2-2-2z"/></svg>
<svg class="ic" style="left:696px;top:1746px" width="30" height="30" viewBox="0 0 30 30"><rect width="30" height="30" rx="3.2" fill="#8e95a3"/><path d="M4.6 7.6l6.9 7.3-6.9 7.3" fill="none" stroke="#2f3035" stroke-width="3.2"/><rect x="14.8" y="19.6" width="11.8" height="3.2" fill="#2f3035"/></svg>
<svg class="ic" style="left:865px;top:1740px" width="40" height="40" viewBox="0 0 40 40"><path fill="#8e95a3" transform="translate(1.50 1.90) scale(1.5000)" d="M19 6.41L17.59 5 12 10.59 6.41 5 5 6.41 10.59 12 5 17.59 6.41 19 12 13.41 17.59 19 19 17.59 13.41 12z"/></svg>
<svg class="ic" style="left:933px;top:1738px" width="47" height="47" viewBox="0 0 47 47"><path fill="#8e95a3" transform="translate(1.10 1.50) scale(1.7917)" d="M19 13h-6v6h-2v-6H5v-2h6V5h2v6h6v2z"/></svg>
<svg class="ic" style="left:2867px;top:1739px" width="45" height="45" viewBox="0 0 45 45"><path fill="#8e95a3" transform="translate(1.25 1.25) scale(1.7292)" d="M7 14H5v5h5v-2H7v-3zm-2-4h2V7h3V5H5v5zm12 7h-3v2h5v-5h-2v3zM14 5v2h3v3h2V5h-5z"/></svg>
<svg class="ic" style="left:2925px;top:1739px" width="46" height="46" viewBox="0 0 46 46"><path fill="#8e95a3" transform="translate(1.00 1.00) scale(1.7500)" d="M7.41 15.41L12 10.83l4.59 4.58L18 14l-6-6-6 6z"/></svg>
<svg class="ic" style="left:122px;top:1799px" width="36" height="36" viewBox="0 0 36 36"><path fill="#fff" transform="translate(1.85 1.00) scale(1.3500)" d="M11.99 18.54l-7.37-5.73L3 14.07l9 7 9-7-1.63-1.27-7.38 5.74zM12 16l7.36-5.73L21 9l-9-7-9 7 1.63 1.27L12 16z"/></svg>
<nav class="g" aria-label="Sidebar navigation">
<span class="t" id="t_lens" style="left:348.17px;top:102px;font-size:36px;letter-spacing:-0.04px">Lens</span>
<span class="t" id="t_cluster" style="left:350.03px;top:189px;font-size:28px;letter-spacing:-0.06px">Cluster</span>
<span class="t" id="t_nodes" style="left:349.54px;top:261px;font-size:28px;letter-spacing:0.05px">Nodes</span>
<span class="t" id="t_work" style="left:351.05px;top:333px;font-size:28px;letter-spacing:-0.09px">Workloads</span>
<span class="t" id="t_conf" style="left:349.93px;top:405px;font-size:28px;letter-spacing:0.14px">Configuration</span>
<span class="t" id="t_net" style="left:349.74px;top:477px;font-size:28px;letter-spacing:0.28px">Network</span>
<span class="t" id="t_stor" style="left:349.93px;top:549px;font-size:28px;letter-spacing:-0.28px">Storage</span>
<span class="t" id="t_ns" style="left:349.74px;top:621px;font-size:28px;letter-spacing:0.04px">Namespaces</span>
<span class="t" id="t_ev" style="left:349.74px;top:693px;font-size:28px;letter-spacing:-0.59px">Events</span>
<span class="t" id="t_apps" style="left:350.46px;top:765px;font-size:28px;letter-spacing:-0.14px">Apps</span>
<span class="t" id="t_ac" style="left:350.76px;top:837px;font-size:28px;letter-spacing:0.03px">Access Control</span>
<span class="t" id="t_cr" style="left:350.33px;top:909px;font-size:28px;letter-spacing:-0.21px">Custom Resources</span>
<span class="t" id="t_cert" style="left:350.33px;top:981px;font-size:28px;letter-spacing:0.2px;color:#ffffff">Certificates</span>
</nav>
<header class="g" aria-label="Cluster name">
<span class="t" id="t_local" style="left:695.52px;top:103px;font-size:28px;letter-spacing:0.56px">local</span>
</header>
<section class="g" aria-label="Certificates toolbar">
<span class="t" id="t_title" style="left:727.8px;top:233px;font-size:32px;letter-spacing:0.07px">Certificates</span>
<span class="t" id="t_items" style="left:1410.3px;top:235px;font-size:28px;letter-spacing:0.24px">4 items</span>
<span class="t" id="t_allns" style="left:2044.46px;top:235px;font-size:28px;letter-spacing:-0.01px">All namespaces</span>
<span class="t" id="t_search" style="left:2515.73px;top:235px;font-size:28px;letter-spacing:-0.35px;color:#747984">Search...</span>
</section>
<section class="g" aria-label="Table header">
<span class="t" id="t_hname" style="left:791.44px;top:335px;font-size:28px;letter-spacing:0.3px;color:#ffffff">Name</span>
<span class="t" id="t_hns" style="left:1480.34px;top:335px;font-size:28px;letter-spacing:0.1px;color:#ffffff">Namespace</span>
<span class="t" id="t_hiss" style="left:2168.87px;top:335px;font-size:28px;letter-spacing:-0.04px;color:#ffffff">Issuer</span>
</section>
<section class="g" aria-label="Row acme-crt">
<span class="t" id="t_r1a" style="left:792.46px;top:405px;font-size:28px;letter-spacing:0.08px">acme-crt</span>
<span class="t" id="t_r1b" style="left:1480.46px;top:405px;font-size:28px;letter-spacing:0.45px">default</span>
<span class="t" id="t_r1c" style="left:2168.82px;top:405px;font-size:28px;letter-spacing:0.18px">letsencrypt-prod</span>
</section>
<section class="g" aria-label="Row bar">
<span class="t" id="t_r2a" style="left:792.06px;top:471px;font-size:28px;letter-spacing:-0.28px">bar</span>
<span class="t" id="t_r2b" style="left:1480.46px;top:471px;font-size:28px;letter-spacing:0.45px">default</span>
<span class="t" id="t_r2c" style="left:2168.82px;top:471px;font-size:28px;letter-spacing:0.18px">letsencrypt-prod</span>
</section>
<section class="g" aria-label="Row foo">
<span class="t" id="t_r3a" style="left:793.23px;top:537px;font-size:28px;letter-spacing:0.56px">foo</span>
<span class="t" id="t_r3b" style="left:1480.46px;top:537px;font-size:28px;letter-spacing:0.45px">default</span>
<span class="t" id="t_r3c" style="left:2168.82px;top:537px;font-size:28px;letter-spacing:0.18px">letsencrypt-prod</span>
</section>
<section class="g" aria-label="Row tls-rancher-ingress">
<span class="t" id="t_r4a" style="left:792.43px;top:603px;font-size:28px;letter-spacing:-0.12px">tls-rancher-ingress</span>
<span class="t" id="t_r4b" style="left:1480.46px;top:603px;font-size:28px;letter-spacing:0.34px">cattle-system</span>
<span class="t" id="t_r4c" style="left:2168.83px;top:603px;font-size:28px;letter-spacing:-0.3px">rancher-server</span>
</section>
<footer class="g" aria-label="Dock">
<span class="t" id="t_term" style="left:742.32px;top:1747px;font-size:28px;letter-spacing:0.36px">Terminal</span>
</footer>
<footer class="g" aria-label="Status bar">
<span class="t" id="t_stat" style="left:163.94px;top:1804px;font-size:24px;letter-spacing:0.35px;color:#ffffff">default</span>
</footer>
<div class="p" id="rim"></div>
</div>
</body>
</html>
